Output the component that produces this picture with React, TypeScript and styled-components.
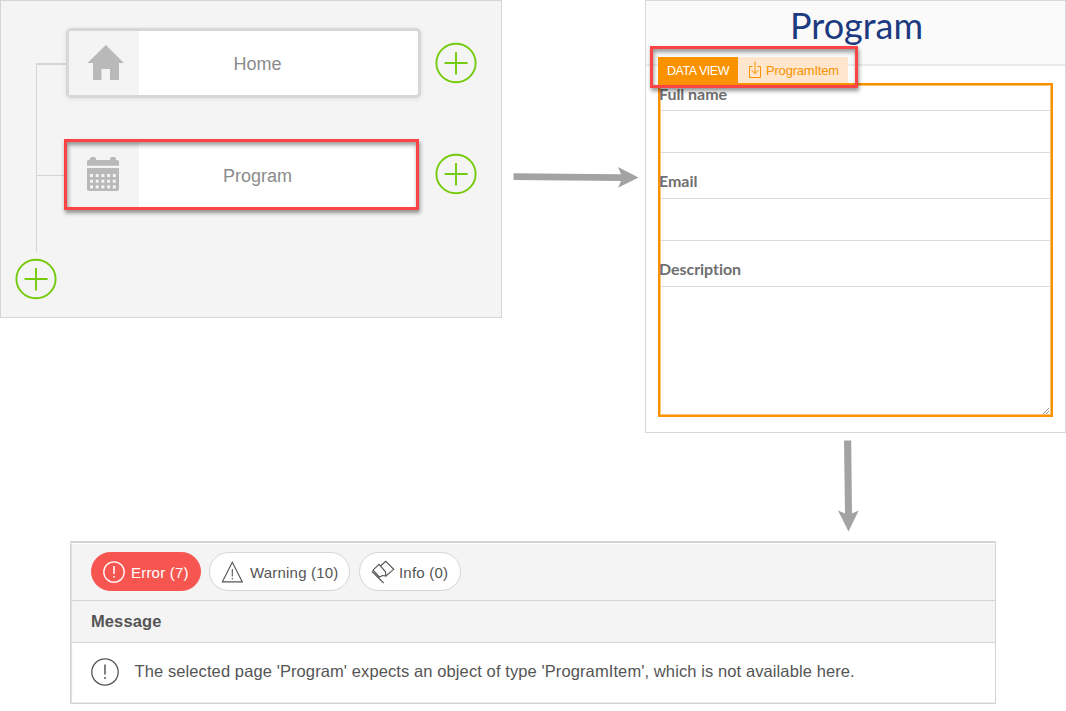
import React from "react";
import styled, { createGlobalStyle } from "styled-components";

const GlobalStyle = createGlobalStyle`
  * { box-sizing: border-box; }
  body { margin: 0; background: #fff; font-family: "Liberation Sans", Arial, sans-serif; }
`;

const Page = styled.main`
  width: 1066px;
  height: 711px;
  overflow: hidden;
  display: flex;
  flex-direction: column;
`;

const TopRow = styled.div`
  display: flex;
  align-items: flex-start;
  height: 433px;
`;

/* Navigation tree */

const TreePanel = styled.section`
  display: flex;
  width: 502px;
  height: 318px;
  background: #f4f4f4;
  border: 1px solid #d5d5d5;
`;

const Rail = styled.div`
  display: flex;
  flex-direction: column;
  align-items: flex-start;
  width: 63px;
  padding: 62px 0 0 35px;
`;

const Branch = styled.div<{ $height: number; $thickness: number; $width: number }>`
  flex: none;
  width: ${(p) => p.$width}px;
  height: ${(p) => p.$height}px;
  border-left: 1px solid #d5d5d5;
  border-top: ${(p) => p.$thickness}px solid #d5d5d5;
`;

const AddButton = styled.button`
  flex: none;
  width: 42px;
  height: 42px;
  padding: 0;
  border: 0;
  background: none;
  svg { display: block; }
`;

const RailAdd = styled(AddButton)`
  margin: 6px 0 0 -21px;
`;

const Nodes = styled.div`
  display: flex;
  flex-direction: column;
  gap: 41px;
  padding-top: 27px;
`;

const NodeRow = styled.div`
  display: flex;
  align-items: flex-start;
  width: 414px;
`;

const NodeCard = styled.div<{ $selected?: boolean }>`
  position: relative;
  display: flex;
  width: 355px;
  height: ${(p) => (p.$selected ? 71 : 70)}px;
  margin-left: ${(p) => (p.$selected ? 0 : 2)}px;
  border: 3px solid ${(p) => (p.$selected ? "#fc4444" : "#d7d7d7")};
  border-radius: ${(p) => (p.$selected ? 0 : 5)}px;
  background: #fff;
  box-shadow: ${(p) => (p.$selected ? "1px 3px 4px rgba(0,0,0,.42)" : "0 1px 5px rgba(0,0,0,.09)")};
  &::after {
    content: "";
    position: absolute;
    inset: 0;
    box-shadow: ${(p) => (p.$selected ? "inset 1px 3px 4px rgba(0,0,0,.4)" : "none")};
  }
`;

const NodeIcon = styled.div<{ $selected?: boolean }>`
  width: ${(p) => (p.$selected ? 72 : 70)}px;
  background: #f4f4f4;
  svg { display: block; }
`;

const NodeLabel = styled.div<{ $selected?: boolean }>`
  width: 237px;
  padding-top: ${(p) => (p.$selected ? 24 : 23)}px;
  text-align: center;
  font-size: 18px;
  line-height: 21px;
  color: #8b8b8b;
`;

const NodeAdd = styled(AddButton)<{ $selected?: boolean }>`
  margin: 14px 0 0 ${(p) => (p.$selected ? 16 : 14)}px;
`;

const ArrowSlot = styled.div`
  width: 143px;
  padding: 162px 0 0 10px;
  svg { display: block; }
`;

/* Page form */

const FormPanel = styled.section`
  width: 421px;
  height: 433px;
  border: 1px solid #d8d8d8;
  background: #fff;
`;

const FormHeader = styled.header`
  height: 65px;
  border-bottom: 2px solid #ebebeb;
  background: #fafafa;
  text-align: center;
`;

const Title = styled.h1`
  margin: 0;
  padding: 2px 0 0 2px;
  font-family: Lato, sans-serif;
  font-size: 36px;
  font-weight: 400;
  line-height: 44px;
  color: #1c3a80;
`;

const TabStrip = styled.div`
  position: relative;
  display: flex;
  width: 190px;
  height: 26px;
  margin: -9px 0 0 12px;
  font-size: 12.5px;
  letter-spacing: -0.45px;
`;

const DataTab = styled.div`
  display: flex;
  align-items: center;
  justify-content: center;
  width: 80px;
  padding-top: 1px;
  background: #fa9200;
  color: #fff;
`;

const EntityTab = styled.div`
  display: flex;
  align-items: center;
  gap: 4px;
  width: 110px;
  padding-left: 10px;
  background: #ffe6cc;
  color: #fa9200;
  font-size: 13px;
  letter-spacing: -0.2px;
`;

const Callout = styled.div`
  position: absolute;
  left: -8px;
  top: -11px;
  width: 208px;
  height: 42px;
  border: 3px solid #fc4444;
  box-shadow: 1px 3px 4px rgba(0,0,0,.42), inset 1px 3px 4px rgba(0,0,0,.4);
`;

const DataFrame = styled.div`
  display: flex;
  flex-direction: column;
  width: 395px;
  height: 334px;
  padding: 1px;
  margin-left: 12px;
  border: 2px solid #fa9200;
  box-shadow: inset 0 0 0 1px #fcc374;
`;

const FieldLabel = styled.label<{ $height: number; $top: number }>`
  flex: none;
  height: ${(p) => p.$height}px;
  padding-top: ${(p) => p.$top}px;
  margin-left: -2px;
  font-family: Lato, sans-serif;
  font-size: 16px;
  font-weight: 700;
  line-height: 20px;
  letter-spacing: -0.05px;
  color: #6f6f6f;
`;

const LabelText = styled.span<{ $raise: number }>`
  display: block;
  margin-top: ${(p) => -p.$raise}px;
`;

const Field = styled.div<{ $last?: boolean }>`
  display: flex;
  align-items: flex-end;
  justify-content: flex-end;
  flex: ${(p) => (p.$last ? "1" : "0 0 43px")};
  border-top: 1px solid #dcdcdc;
  border-bottom: ${(p) => (p.$last ? "0" : "1px solid #dcdcdc")};
`;

const DownArrowSlot = styled.div`
  height: 108px;
  padding: 7px 0 0 836px;
  svg { display: block; }
`;

/* Message console */

const Console = styled.section`
  width: 926px;
  height: 163px;
  margin-left: 70px;
  border: 1px solid #d4d4d4;
  border-top-width: 2px;
  box-shadow: inset 1px 0 1px #ddd, inset 0 -1px 0 #eee;
  color: #555;
`;

const Filters = styled.div`
  display: flex;
  gap: 8px;
  height: 58px;
  padding: 8px 0 0 20px;
  border-top: 1px solid #fff;
  border-bottom: 1px solid #d4d4d4;
  background: #f4f4f4;
  box-shadow: inset 2px 0 1px -1px #ddd;
`;

const Pill = styled.button<{ $active?: boolean; $width: number; $gap: number }>`
  display: flex;
  align-items: center;
  gap: ${(p) => p.$gap}px;
  width: ${(p) => p.$width}px;
  height: 39px;
  padding: 0 0 0 11px;
  border: 1px solid ${(p) => (p.$active ? "#f75650" : "#d5d5d5")};
  border-radius: 20px;
  background: ${(p) => (p.$active ? "#f75650" : "#fff")};
  color: ${(p) => (p.$active ? "#fff" : "#555")};
  font-family: inherit;
  font-size: 15px;
  white-space: nowrap;
  letter-spacing: 0.2px;
  svg { flex: none; }
  span { padding-top: 2px; }
  &:last-child { margin-left: 1px; }
`;

const MessageHeader = styled.div`
  display: flex;
  align-items: center;
  height: 42px;
  padding-left: 20px;
  border-bottom: 1px solid #d4d4d4;
  background: #f4f4f4;
  box-shadow: inset 2px 0 1px -1px #ddd;
  font-size: 16.5px;
  font-weight: 700;
  letter-spacing: 0.1px;
`;

const MessageRow = styled.div`
  display: flex;
  align-items: center;
  gap: 15.5px;
  height: 58px;
  padding-left: 20px;
  font-size: 16.5px;
  letter-spacing: 0.1px;
  white-space: nowrap;
  span { padding-bottom: 2px; }
`;

const PlusIcon = () => (
  <svg width="42" height="42" viewBox="0 0 42 42" fill="none" stroke="#74ca0c" strokeWidth="1.9">
    <ellipse cx="21" cy="21" rx="19.6" ry="19.2" />
    <path d="M9.6 21h23M21 10v22.4" />
  </svg>
);

const HomeIcon = () => (
  <svg width="70" height="64" viewBox="0 0 70 64" fill="#b9b9b9">
    <path d="M36.800 14 55 32H50v17h-9V38h-8.500v11H24V32h-5.500z" />
  </svg>
);

const CalendarIcon = () => (
  <svg width="72" height="65" viewBox="0 0 72 65">
    <path
      fill="#b9b9b9"
      d="M20 23.700v-4q0-2 2-2h1v-1q0-1.700 2-1.700h2q2 0 2 2v1h14v-1q0-2 2-2h2q2 0 2 2v1h1q2 0 2 2v3.700zM20 26h32v21q0 2-2 2H22q-2 0-2-2z"
    />
    {[32, 37.7, 43.4].map((y) =>
      [23, 28.7, 34.4, 40.1, 45.8].map((x) => (
        <rect key={`${x}-${y}`} x={x} y={y} width="3" height="3" fill="#f4f4f4" />
      ))
    )}
  </svg>
);

const AlertIcon = ({ size }: { size: number }) => (
  <svg width={size} height={size} viewBox={`0 0 ${size} ${size}`} fill="none" stroke="currentColor" strokeWidth="1.3">
    <circle cx={size / 2} cy={size / 2} r={size / 2 - 0.8} />
    <path
      d={`M${size / 2} ${size / 2 - size * 0.27}v${size * 0.36}M${size / 2} ${size / 2 + size * 0.18}v${size * 0.07}`}
      strokeWidth="1.5"
    />
  </svg>
);

const WarningIcon = () => (
  <svg width="22" height="22" viewBox="0 0 22 22" fill="none" stroke="currentColor" strokeWidth="1.1">
    <path d="M11.300 1.200 21.300 20.900H1.300z" />
    <path d="M11.300 8v7.500M11.300 17v1.500" />
  </svg>
);

const InfoIcon = () => (
  <svg width="24" height="24" viewBox="0 0 24 24" fill="none" stroke="currentColor" strokeWidth="1.1">
    <path d="M1 11.500 12.600 23M2 10.200 8 4.400 14.500 11.800 14.800 16 11.600 15.500 8.500 17z" />
    <path d="M9.500 6 14.700 1.300 22.700 9.300 14.800 16" />
  </svg>
);

const DownloadIcon = () => (
  <svg width="14" height="18" viewBox="0 0 14 18" fill="none" stroke="#fa9200">
    <path d="M4.500 5.500H1.500v11h11v-11H9.500M7 .5v12M3.500 9 7 12.500 10.500 9" />
  </svg>
);

const ResizeGrip = () => (
  <svg width="8" height="7" viewBox="0 0 8 7" stroke="#777" strokeWidth="0.8">
    <path d="M1 7 7 1M4 7l3-3" />
  </svg>
);

export default function App() {
  return (
    <Page>
      <GlobalStyle />
      <TopRow>
        <TreePanel>
          <Rail>
            <Branch $width={30} $height={112} $thickness={2} />
            <Branch $width={28} $height={77} $thickness={1} />
            <RailAdd aria-label="Add item"><PlusIcon /></RailAdd>
          </Rail>
          <Nodes>
            <NodeRow>
              <NodeCard>
                <NodeIcon><HomeIcon /></NodeIcon>
                <NodeLabel>Home</NodeLabel>
              </NodeCard>
              <NodeAdd aria-label="Add below Home"><PlusIcon /></NodeAdd>
            </NodeRow>
            <NodeRow>
              <NodeCard $selected>
                <NodeIcon $selected><CalendarIcon /></NodeIcon>
                <NodeLabel $selected>Program</NodeLabel>
              </NodeCard>
              <NodeAdd $selected aria-label="Add below Program"><PlusIcon /></NodeAdd>
            </NodeRow>
          </Nodes>
        </TreePanel>
        <ArrowSlot>
          <svg width="128" height="30" viewBox="0 0 128 30" fill="#a3a3a3">
            <path d="M1.500 11.300 109 12.200 106 5 126.500 15.500 106 25.700 109 19 1.500 18z" />
          </svg>
        </ArrowSlot>
        <FormPanel>
          <FormHeader><Title>Program</Title></FormHeader>
          <TabStrip>
            <DataTab>DATA VIEW</DataTab>
            <EntityTab><DownloadIcon />ProgramItem</EntityTab>
            <Callout />
          </TabStrip>
          <DataFrame>
            <FieldLabel $height={24} $top={0}><LabelText $raise={2}>Full name</LabelText></FieldLabel>
            <Field />
            <FieldLabel $height={45} $top={19}><LabelText $raise={1}>Email</LabelText></FieldLabel>
            <Field />
            <FieldLabel $height={45} $top={19}><LabelText $raise={1}>Description</LabelText></FieldLabel>
            <Field $last><ResizeGrip /></Field>
          </DataFrame>
        </FormPanel>
      </TopRow>
      <DownArrowSlot>
        <svg width="24" height="94" viewBox="0 0 24 94" fill="#a3a3a3">
          <path d="M8 .5h7.200L16 73.500 22.700 70.500 12.500 91.500 2 70.500 9 73.500z" />
        </svg>
      </DownArrowSlot>
      <Console>
        <Filters>
          <Pill $active $width={110} $gap={6}><AlertIcon size={22} /><span>Error (7)</span></Pill>
          <Pill $width={141} $gap={7}><WarningIcon /><span>Warning (10)</span></Pill>
          <Pill $width={102} $gap={4}><InfoIcon /><span>Info (0)</span></Pill>
        </Filters>
        <MessageHeader>Message</MessageHeader>
        <MessageRow>
          <AlertIcon size={28} />
          <span>The selected page 'Program' expects an object of type 'ProgramItem', which is not available here.</span>
        </MessageRow>
      </Console>
    </Page>
  );
}
